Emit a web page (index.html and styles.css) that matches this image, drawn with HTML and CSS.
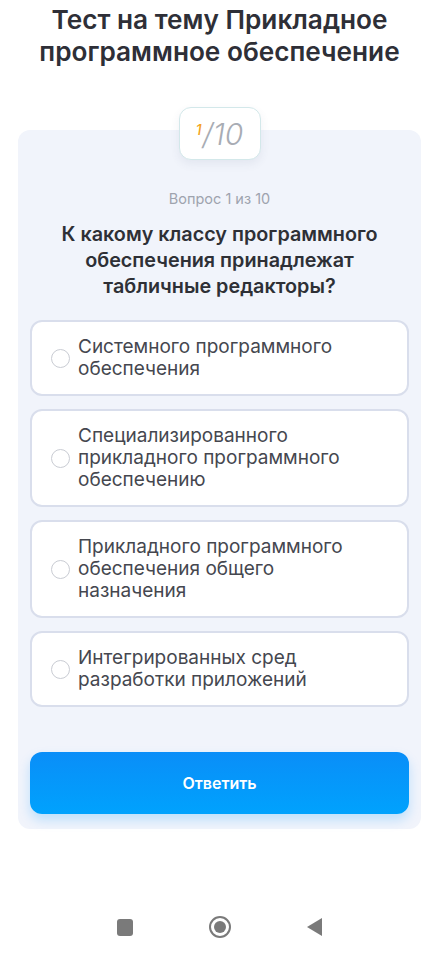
FILE: index.html
```html
<!DOCTYPE html>
<html lang="ru">
<head>
    <meta charset="UTF-8" />
    <meta name="viewport" content="width=device-width, initial-scale=1.0"/>
    <title>Тест на тему Прикладное программное обеспечение</title>
    <link rel="stylesheet" href="styles.css">
</head>
<body>
    <h1 class="title">Тест на тему Прикладное программное обеспечение</h1>

    <div class="card">
        <div class="counter"><sup>1</sup>/10</div>
        <div class="step">Вопрос 1 из 10</div>
        <div class="question">К какому классу программного обеспечения принадлежат табличные редакторы?</div>

        <div class="options">
            <label class="option">
                <span class="radio"></span>
                <span class="option-text">Системного программного обеспечения</span>
            </label>
            <label class="option">
                <span class="radio"></span>
                <span class="option-text">Специализированного прикладного программного обеспечению</span>
            </label>
            <label class="option">
                <span class="radio"></span>
                <span class="option-text">Прикладного программного обеспечения общего назначения</span>
            </label>
            <label class="option">
                <span class="radio"></span>
                <span class="option-text">Интегрированных сред разработки приложений</span>
            </label>
        </div>

        <button class="answer">Ответить</button>
    </div>

    <div class="navbar">
        <div class="nav-item"><span class="nav-square"></span></div>
        <div class="nav-item"><span class="nav-home"></span></div>
        <div class="nav-item"><span class="nav-back"></span></div>
    </div>
</body>
</html>
```

FILE: styles.css
```css
body {
    font-family: Inter, "Noto Sans", sans-serif;
    background-color: #ffffff;
    margin: 0;
    width: 439px;
}
.title {
    margin: 4px 0 0;
    padding: 0 20px;
    font-size: 26.2px;
    line-height: 32px;
    font-weight: 600;
    color: #2e2f37;
    text-align: center;
}
.card {
    margin: 62px 18px 0;
    padding: 0 12px 15px;
    background-color: #f1f4fb;
    border-radius: 12px;
    display: flex;
    flex-direction: column;
    align-items: center;
}
.counter {
    margin-top: -23px;
    width: 82px;
    height: 53px;
    box-sizing: border-box;
    background-color: #ffffff;
    border: 1px solid #d3e8ea;
    border-radius: 12px;
    box-shadow: 0 4px 10px rgba(60, 80, 120, 0.08);
    display: flex;
    align-items: center;
    justify-content: center;
    font-size: 30px;
    font-style: italic;
    font-weight: 300;
    color: #a8acb4;
}
.counter sup {
    font-size: 14px;
    font-weight: 500;
    color: #f4a321;
    margin-right: 1px;
    position: relative;
    top: -4px;
}
.step {
    margin-top: 30px;
    font-size: 14.5px;
    line-height: 18px;
    color: #9ea3ae;
}
.question {
    margin-top: 13px;
    padding: 0 14px;
    font-size: 19.8px;
    line-height: 26px;
    font-weight: 600;
    color: #2e3036;
    text-align: center;
}
.options {
    margin-top: 21px;
    width: 100%;
    display: flex;
    flex-direction: column;
    gap: 13px;
}
.option {
    display: flex;
    align-items: center;
    gap: 8px;
    padding: 14px 50px 14px 19px;
    background-color: #ffffff;
    border: 2px solid #d9deec;
    border-radius: 12px;
}
.radio {
    flex: none;
    width: 17px;
    height: 17px;
    border: 1px solid #c9ccd3;
    border-radius: 50%;
    background-color: #ffffff;
}
.option-text {
    font-size: 19px;
    line-height: 22px;
    color: #45474f;
}
.answer {
    margin-top: 45px;
    width: 100%;
    height: 62px;
    border: none;
    border-radius: 12px;
    background: linear-gradient(#0a8ef8, #00a2fd);
    box-shadow: 0 6px 12px rgba(0, 150, 255, 0.22);
    color: #ffffff;
    font-family: Inter, "Noto Sans", sans-serif;
    font-size: 16px;
    font-weight: 600;
}
.navbar {
    margin-top: 86px;
    display: flex;
    justify-content: center;
}
.nav-item {
    width: 95px;
    height: 24px;
    display: flex;
    align-items: center;
    justify-content: center;
}
.nav-square {
    width: 16px;
    height: 17px;
    border-radius: 3px;
    background-color: #7a7a7a;
}
.nav-home {
    width: 18px;
    height: 18px;
    border: 2px solid #7a7a7a;
    border-radius: 50%;
    display: flex;
    align-items: center;
    justify-content: center;
}
.nav-home::after {
    content: "";
    width: 12px;
    height: 12px;
    border-radius: 50%;
    background-color: #7a7a7a;
}
.nav-back {
    width: 0;
    height: 0;
    border-top: 9px solid transparent;
    border-bottom: 9px solid transparent;
    border-right: 15px solid #7a7a7a;
}
```
